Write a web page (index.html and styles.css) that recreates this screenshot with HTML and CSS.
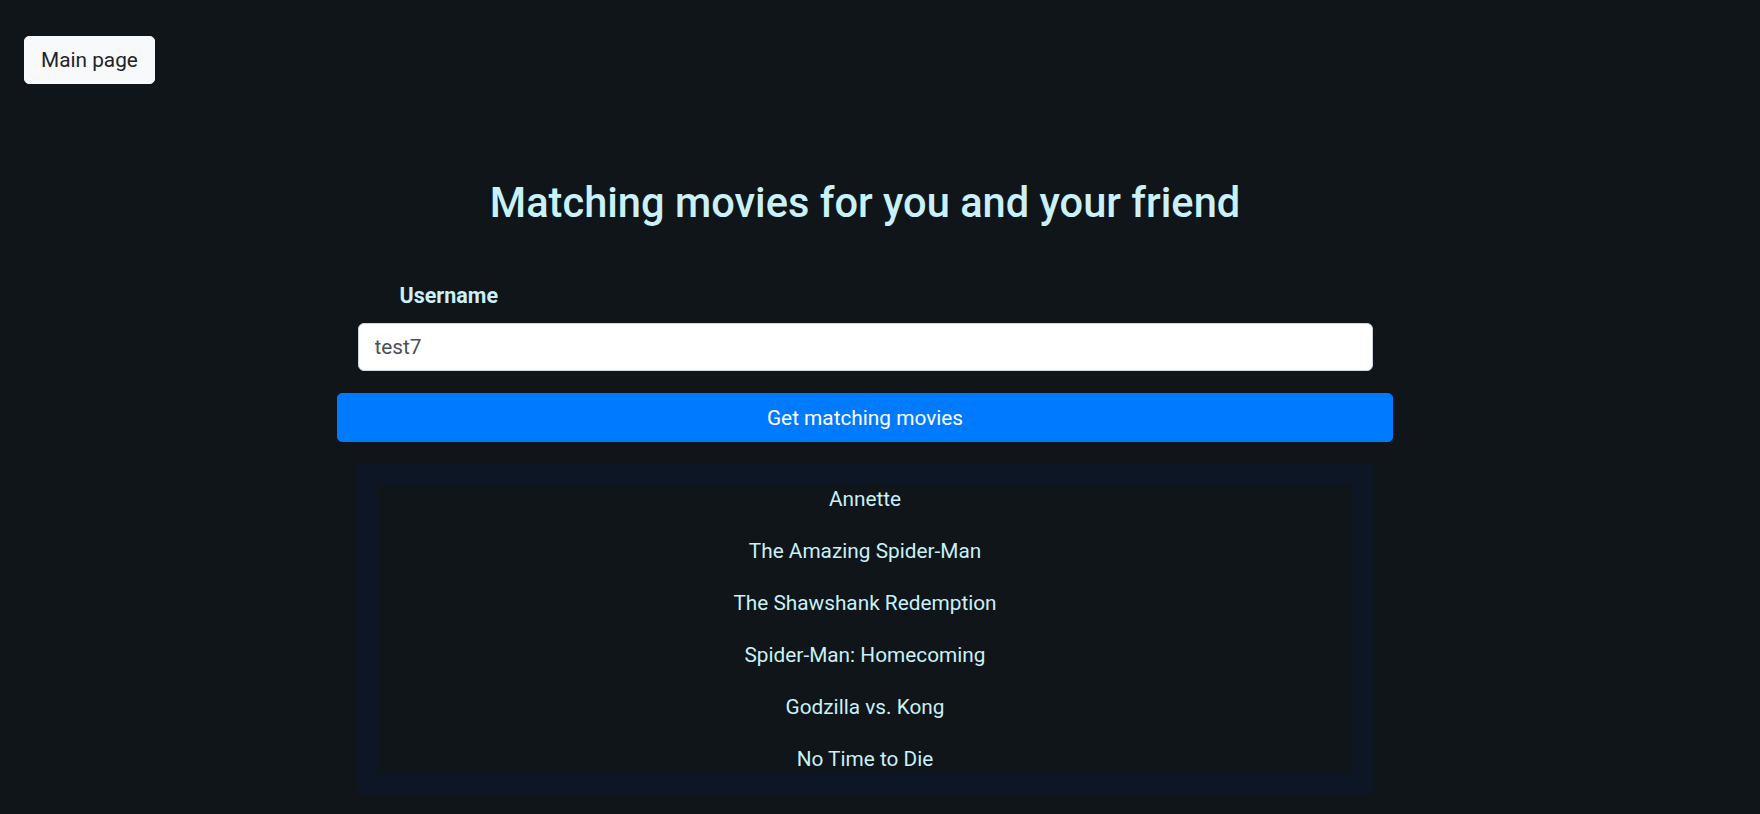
FILE: index.html
```html
<!DOCTYPE html>
<html lang="en">
<head>
<meta charset="utf-8">
<title>Matching movies</title>
<link rel="stylesheet" href="styles.css">
</head>
<body>
<div class="topbar">
  <button class="btn-main" type="button">Main page</button>
</div>
<main class="content">
  <h1 class="title">Matching movies for you and your friend</h1>
  <div class="form-group">
    <label class="label" for="username">Username</label>
    <input class="input" id="username" type="text" value="test7">
  </div>
  <button class="btn-primary" type="button">Get matching movies</button>
  <div class="list-box">
    <div class="list-inner">
      <p class="movie">Annette</p>
      <p class="movie">The Amazing Spider-Man</p>
      <p class="movie">The Shawshank Redemption</p>
      <p class="movie">Spider-Man: Homecoming</p>
      <p class="movie">Godzilla vs. Kong</p>
      <p class="movie">No Time to Die</p>
    </div>
  </div>
</main>
</body>
</html>
```
FILE: styles.css
```css
* { box-sizing: border-box; }
html, body { height: 100%; }
body {
  margin: 0;
  background: #0f1519;
  font-family: Roboto, "Liberation Sans", Arial, sans-serif;
  color: #caf0f8;
  overflow: hidden;
}
.topbar {
  padding: 36px 0 0 24px;
}
.btn-main {
  font-family: inherit;
  font-size: 20.8px;
  line-height: 30px;
  padding: 8px 16px;
  background: #f8f9fa;
  color: #212529;
  border: 1px solid #f8f9fa;
  border-radius: 5px;
  cursor: pointer;
}
.content {
  display: flex;
  flex-direction: column;
  align-items: center;
  padding-right: 30px;
}
.title {
  margin: 95px 0 0;
  font-size: 41.6px;
  line-height: 48px;
  font-weight: 500;
  color: #caf0f8;
}
.form-group {
  width: 1015px;
  margin-top: 54px;
  display: flex;
  flex-direction: column;
}
.label {
  font-size: 21.5px;
  line-height: 30px;
  font-weight: 700;
  margin: 0 0 12px 42px;
  color: #caf0f8;
}
.input {
  width: 100%;
  height: 48px;
  padding: 8px 16px;
  font-family: inherit;
  font-size: 20.8px;
  line-height: 30px;
  color: #495057;
  background: #fff;
  border: 1px solid #ced4da;
  border-radius: 6px;
  outline: none;
}
.btn-primary {
  width: 1056px;
  height: 49px;
  margin-top: 22px;
  font-family: inherit;
  font-size: 20.8px;
  line-height: 30px;
  color: #fff;
  background: #007bff;
  border: 1px solid #007bff;
  border-radius: 5px;
  cursor: pointer;
}
.list-box {
  width: 1016px;
  margin-top: 21px;
  border-style: solid;
  border-color: #0c1624;
  border-width: 20px 21px 21px 21px;
}
.list-inner {
  height: 291px;
  overflow: hidden;
  text-align: center;
  padding-top: 1px;
}
.movie {
  margin: 0 0 22px;
  font-size: 20.8px;
  line-height: 30px;
  color: #caf0f8;
}
```
